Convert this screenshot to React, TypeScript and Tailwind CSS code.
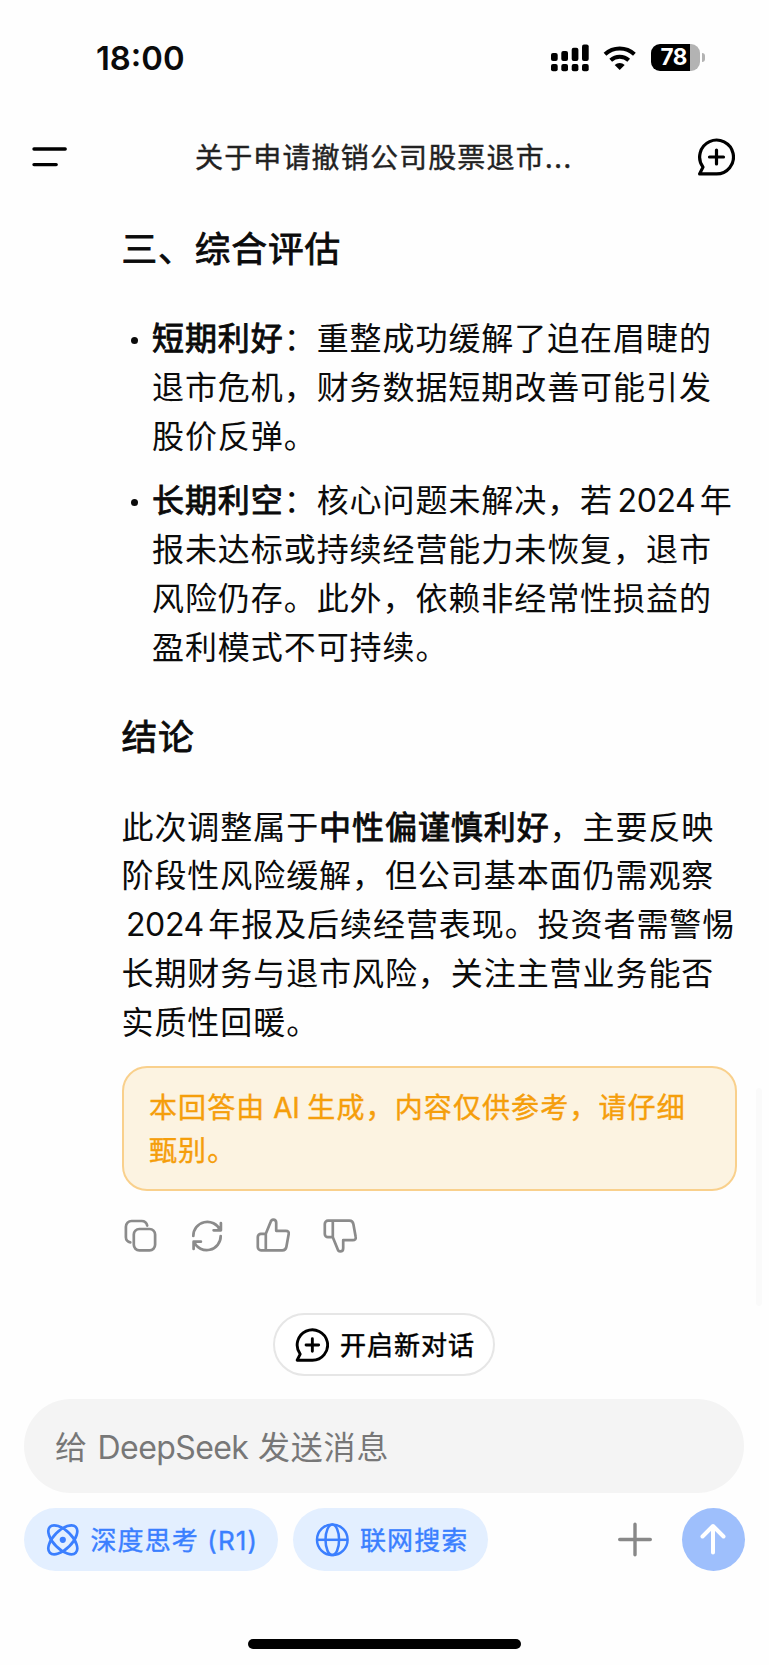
import type { ReactNode } from "react";

type IconProps = {
  className?: string;
};

export default function App() {
  return (
    <main className="relative flex h-[1665px] w-[769px] flex-col overflow-hidden bg-[#fefefe] font-['Inter','Noto_Sans_CJK_SC',sans-serif] text-[#0b0b0b]">
      <StatusBar />
      <Header title="关于申请撤销公司股票退市..." />

      <article className="ml-[121.5px] mt-[27px] w-[615px] whitespace-nowrap text-[32px] leading-[48.8px] tracking-[0.93px]">
        <Heading>三、综合评估</Heading>
        <ul className="mb-[41px] mt-[41px] flex flex-col gap-4">
          <Item>
            <Strong>短期利好</Strong>：重整成功缓解了迫在眉睫的<br />
            退市危机，财务数据短期改善可能引发<br />
            股价反弹。
          </Item>
          <Item>
            <Strong>长期利空</Strong>：核心问题未解决，若<Year />年<br />
            报未达标或持续经营能力未恢复，退市<br />
            风险仍存。此外，依赖非经常性损益的<br />
            盈利模式不可持续。
          </Item>
        </ul>
        <Heading>结论</Heading>
        <p className="mt-[42px]">
          此次调整属于<Strong>中性偏谨慎利好</Strong>，主要反映<br />
          阶段性风险缓解，但公司基本面仍需观察<br />
          <Year />年报及后续经营表现。投资者需警惕<br />
          长期财务与退市风险，关注主营业务能否<br />
          实质性回暖。
        </p>
      </article>

      <div className="ml-[122px] mt-[18px] h-[125px] w-[615px] rounded-[25px] border-2 border-[#f9d08c] bg-[#fcf3e1] pl-[25px] pt-[19px] text-[28px] leading-[43.4px] tracking-[1.12px] text-[#f59e0b] [-webkit-text-stroke:0.4px]">
        本回答由<span className="tracking-[-0.2px]"> AI </span>生成，内容仅供参考，请仔细<br />甄别。
      </div>

      <div className="ml-[122px] mt-[26px] flex gap-[30.5px] text-[#8b8b8b]">
        <CopyIcon className="size-9" />
        <RefreshIcon className="size-9" />
        <ThumbIcon className="size-9" />
        <ThumbIcon className="mt-px size-9 rotate-180 -scale-x-100" />
      </div>

      <button className="ml-[273px] mt-[59px] flex h-[63px] w-[222px] items-center rounded-full border-2 border-[#e6e6e6] bg-white pl-[18px] pt-px text-[26px] tracking-[1px] text-black [-webkit-text-stroke:0.5px]">
        <NewChatIcon className="size-9" />
        <span className="ml-[11px] pt-px">开启新对话</span>
      </button>

      <footer className="mt-[23px] px-6">
        <div className="flex h-[94px] w-[720px] items-center rounded-full bg-[#f4f4f4] pl-[31px] pt-[4px] text-[32px] tracking-[0.8px] text-[#777]">
          <span>给 <span className="tracking-[-0.6px]">DeepSeek</span> 发送消息</span>
        </div>
        <div className="mt-[15px] flex h-[63px] items-center text-[26px] tracking-[1.1px] text-[#3b7fff] [-webkit-text-stroke:0.4px]">
          <button className="flex h-[63px] w-[254px] items-center rounded-full bg-[#e3efff] pl-[21px] pt-px">
            <AtomIcon className="size-9" />
            <span className="ml-[9.500px] pt-px">深度思考 (R1)</span>
          </button>
          <button className="ml-[15px] flex h-[63px] w-[195px] items-center rounded-full bg-[#e3efff] pl-[21px] pt-px">
            <GlobeIcon className="size-9" />
            <span className="ml-[10px] pt-px">联网搜索</span>
          </button>
          <svg viewBox="0 0 36 36" className="ml-[129px] size-9" fill="none" stroke="#888" strokeWidth="3.4" strokeLinecap="round">
            <path d="M18 3.200v30.600M2.700 18.500h30.600" />
          </svg>
          <button className="ml-[28.5px] flex size-[63px] items-center justify-center rounded-full bg-[#9ebffc]">
            <svg viewBox="0 0 36 36" className="size-9" fill="none" stroke="#fff" strokeWidth="4" strokeLinecap="round" strokeLinejoin="round">
              <path d="M18 31.500V5M7.500 15.500L18 5l10.500 10.500" />
            </svg>
          </button>
        </div>
      </footer>

      <div className="ml-[247.5px] mt-[68px] h-[10px] w-[273.5px] rounded-full bg-black" />

      {/* scroll thumb, floats over the conversation */}
      <div className="absolute left-[756px] top-[1088px] h-[218px] w-[6px] rounded-full bg-[#fafafa]" />
    </main>
  );
}

function Heading({ children }: { children: ReactNode }) {
  return <h3 className="h-12 text-[35.7px] leading-[46px] [-webkit-text-stroke:0.8px]">{children}</h3>;
}

function Item({ children }: { children: ReactNode }) {
  return (
    <li className="flex">
      <span className="ml-[9.5px] mr-[14px] mt-[22px] size-[7px] shrink-0 rounded-full bg-[#0b0b0b]" />
      <p>{children}</p>
    </li>
  );
}

function Strong({ children }: { children: ReactNode }) {
  return <strong className="font-normal [-webkit-text-stroke:0.9px]">{children}</strong>;
}

function Year() {
  return <span className="ml-[4.5px] mr-[4.5px] tracking-[-0.4px]">2024</span>;
}

function StatusBar() {
  return (
    <div className="flex h-[115px] items-center">
      <span className="ml-[96px] w-[455px] pt-[2px] text-[32.8px] font-semibold">18:00</span>
      <svg viewBox="0 0 38 28" className="h-7 w-[38px]">
        <rect x="0" y="9" width="6.700" height="8" rx="2" />
        <rect x="10.300" y="7" width="6.700" height="10" rx="2" />
        <rect x="20.700" y="3.700" width="6.700" height="13.300" rx="2" />
        <rect x="31" y="0.500" width="6.700" height="16.500" rx="2" />
        <rect x="0" y="20" width="6.700" height="7.300" rx="2" />
        <rect x="10.300" y="20" width="6.700" height="7.300" rx="2" />
        <rect x="20.700" y="20" width="6.700" height="7.300" rx="2" />
        <rect x="31" y="20" width="6.700" height="7.300" rx="2" />
      </svg>
      <svg viewBox="0 0 34 26" className="ml-[14px] h-[26px] w-[34px]" fill="none" stroke="#000" strokeWidth="4">
        <path d="M2 9.200a21.500 21.500 0 0 1 29.400 0" />
        <path d="M7.700 15.200a13.300 13.300 0 0 1 18 0" />
        <path d="M11.700 19.900a7.300 7.300 0 0 1 10 0l-5 5z" fill="#000" stroke="none" />
      </svg>
      <div className="ml-[14px] flex h-[27px] w-[49px] items-center overflow-hidden rounded-[9px] bg-[linear-gradient(to_right,#000_39px,#b3b3b3_39px)]">
        <span className="ml-[9.5px] text-[22.5px] font-bold leading-none tracking-[-0.5px] text-white">78</span>
      </div>
      <div className="ml-[2px] h-[9px] w-[3px] rounded-r-full bg-[#b3b3b3]" />
    </div>
  );
}

function Header({ title }: { title: string }) {
  return (
    <header className="flex h-[84px] items-center">
      <svg viewBox="0 0 36 24" className="ml-[31px] h-6 w-9" stroke="#000" strokeWidth="3.400" strokeLinecap="round">
        <path d="M3 4h31.200M3 19.600h22.200" />
      </svg>
      <h1 className="ml-[128px] w-[500px] pt-[2px] text-[28px] tracking-[1.150px] text-[#222] [-webkit-text-stroke:0.4px]">{title}</h1>
      <NewChatIcon className="size-10 text-black" />
    </header>
  );
}

function NewChatIcon({ className }: IconProps) {
  return (
    <svg viewBox="0 0 40 40" className={className} fill="none" stroke="currentColor" strokeWidth="3.200" strokeLinecap="round" strokeLinejoin="round">
      <path d="M21.500 36.900H4.600l3.400-6.800A16.900 16.900 0 1 1 21.500 36.900z" />
      <path d="M21.500 13v14M14.500 20h14" />
    </svg>
  );
}

function CopyIcon({ className }: IconProps) {
  return (
    <svg viewBox="0 0 36 36" className={className} fill="none" stroke="currentColor" strokeWidth="2.700" strokeLinecap="round">
      <rect x="11.800" y="12" width="21.300" height="21.300" rx="5.500" />
      <path d="M8.300 25.300a5 5 0 0 1-4.400-5V9.700a5.700 5.700 0 0 1 5.700-5.700h10a5.700 5.700 0 0 1 5.600 4.600" />
    </svg>
  );
}

function RefreshIcon({ className }: IconProps) {
  return (
    <svg viewBox="0 0 36 36" className={className} fill="none" stroke="currentColor" strokeWidth="2.700" strokeLinecap="round" strokeLinejoin="round">
      <path d="M4.300 19A14 14 0 0 1 31 13M31.900 6v7.300h-7.300" />
      <path d="M31.700 19A14 14 0 0 1 5 25M4.600 32v-7.300h7.300" />
    </svg>
  );
}

function ThumbIcon({ className }: IconProps) {
  return (
    <svg viewBox="0 0 36 36" className={className} fill="none" stroke="currentColor" strokeWidth="2.700" strokeLinecap="round" strokeLinejoin="round">
      <path d="M10.800 16.800l4.700-11.600c.500-1.700 1.500-2.600 2.700-2.600 2 0 3 1.400 3 3.200v8h9.600c2.200 0 3.300 1.300 2.900 3.200l-2.300 12.700c-.400 2.500-1.800 3.600-4 3.600H6a3.200 3.200 0 0 1-3.200-3.200V20a3.200 3.200 0 0 1 3.200-3.200zM10.800 16.800v16.500" />
    </svg>
  );
}

function AtomIcon({ className }: IconProps) {
  return (
    <svg viewBox="0 0 36 36" className={className} fill="none" stroke="currentColor" strokeWidth="2.700">
      <ellipse cx="17.800" cy="17.800" rx="18.300" ry="9.200" transform="rotate(45 17.800 17.800)" />
      <ellipse cx="17.800" cy="17.800" rx="18.300" ry="9.200" transform="rotate(-45 17.800 17.800)" />
      <circle cx="17.800" cy="17.800" r="3.100" fill="currentColor" stroke="none" />
    </svg>
  );
}

function GlobeIcon({ className }: IconProps) {
  return (
    <svg viewBox="0 0 36 36" className={className} fill="none" stroke="currentColor" strokeWidth="2.500">
      <circle cx="18.300" cy="17.800" r="15.300" />
      <ellipse cx="18.300" cy="17.800" rx="6.800" ry="15.300" />
      <path d="M3 17.800h30.600" />
    </svg>
  );
}
